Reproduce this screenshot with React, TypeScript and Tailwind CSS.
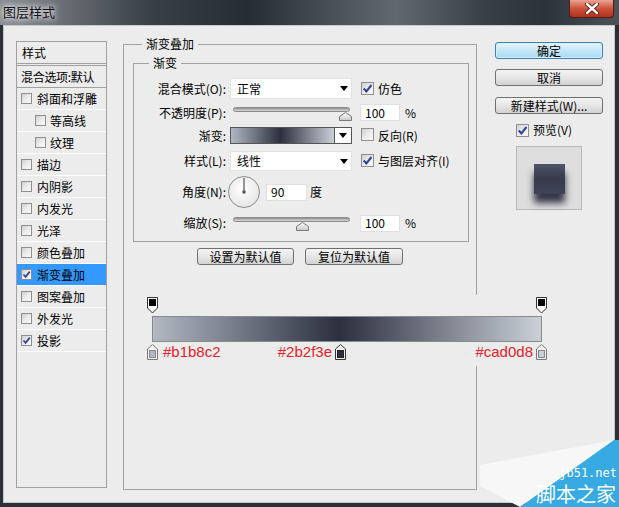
import React from "react";

const Check = ({ on = false, small = false }: { on?: boolean; small?: boolean }) => (
  <span
    className={`${
      small ? "w-[11px] h-[11px]" : "w-[13px] h-[13px]"
    } shrink-0 inline-flex items-center justify-center border border-[#8e8f8f] bg-linear-to-br from-[#cfcfcf] via-[#ebebeb] to-[#fafafa]`}
  >
    {on && (
      <svg viewBox="0 0 10 10" className="w-full h-full">
        <path d="M1.6 5 L4 7.6 L8.6 1.8" fill="none" stroke="#33439a" strokeWidth="1.9" />
      </svg>
    )}
  </span>
);

const Btn = ({ children, className = "" }: { children: React.ReactNode; className?: string }) => (
  <div
    className={`h-[17px] flex items-center justify-center rounded-[3px] border text-[12px] leading-none text-black ${className}`}
  >
    {children}
  </div>
);

const plain = "border-[#707070] bg-linear-to-b from-[#f4f4f4] via-[#e6e6e6] to-[#d2d2d2]";

const Select = ({ value }: { value: string }) => (
  <div className="w-[122px] h-full bg-white border border-[#e2e2e2] flex items-center justify-between pl-[6px] pr-[3px]">
    <span>{value}</span>
    <svg width="8" height="5">
      <path d="M0 0H8L4 5Z" fill="#000" />
    </svg>
  </div>
);

const Thumb = ({ className }: { className: string }) => (
  <svg className={`absolute top-[5px] ${className}`} width="13" height="9">
    <defs>
      <linearGradient id="th" x1="0" y1="0" x2="0" y2="1">
        <stop offset="0" stopColor="#ffffff" />
        <stop offset="1" stopColor="#c8c8c8" />
      </linearGradient>
    </defs>
    <path d="M6.5 0.5 L12.5 4.5 V8.5 H0.5 V4.5 Z" fill="url(#th)" stroke="#7a7a7a" />
  </svg>
);

const Slider = ({ thumb }: { thumb: string }) => (
  <div className="relative w-[117px] h-[14px]">
    <div className="mt-[2px] h-[5px] rounded-full border border-[#8a8a8a] bg-linear-to-b from-[#8f8f8f] to-[#dadada]" />
    <Thumb className={thumb} />
  </div>
);

const Num = ({ v, w = "w-[40px]" }: { v: string; w?: string }) => (
  <div className={`${w} h-[17px] bg-white border border-[#e0e0e0] flex items-center pl-[4px]`}>{v}</div>
);

const Label = ({ children }: { children: React.ReactNode }) => (
  <span className="w-[92px] text-right shrink-0">{children}</span>
);

const TopStop = () => (
  <svg width="11" height="17" className="shrink-0">
    <path d="M0.5 0.5 H10.5 V11 L5.5 16 L0.5 11 Z" fill="#fafafa" stroke="#333" />
    <rect x="2" y="2" width="7" height="7" fill="#000" />
  </svg>
);

const BottomStop = ({ fill, dark = false }: { fill: string; dark?: boolean }) => (
  <svg width="11" height="16" className="shrink-0">
    <path d="M5.5 0.5 L10.5 5 V15.5 H0.5 V5 Z" fill="#f2f2f2" stroke={dark ? "#333" : "#7a7a7a"} />
    <rect x="2.5" y="6.5" width="6" height="7" fill={fill} stroke={dark ? "#222" : "#888"} />
  </svg>
);

const items: { t: string; sub?: boolean; on?: boolean; sel?: boolean }[] = [
  { t: "斜面和浮雕" },
  { t: "等高线", sub: true },
  { t: "纹理", sub: true },
  { t: "描边" },
  { t: "内阴影" },
  { t: "内发光" },
  { t: "光泽" },
  { t: "颜色叠加" },
  { t: "渐变叠加", on: true, sel: true },
  { t: "图案叠加" },
  { t: "外发光" },
  { t: "投影", on: true },
];

export default function App() {
  return (
    <div className="relative w-[619px] h-[507px] overflow-hidden bg-[#2b3037] font-['Noto_Sans_CJK_SC',sans-serif] text-[12px] leading-[14px] text-black">
      {/* title bar */}
      <div className="h-[25px] flex items-start justify-between bg-[linear-gradient(90deg,#8a8f96_0%,#6a6f76_10%,#3a4047_24%,#262c33_40%,#50565d_56%,#626870_64%,#394047_78%,#2c323a_88%,#4d535b_100%)]">
        <span className="ml-[3px] mt-[4px] text-[13px] leading-[16px] text-[#111] [text-shadow:0_0_5px_#fff,0_0_9px_#fff]">
          图层样式
        </span>
        <div className="mr-[5px] w-[45px] h-[18px] rounded-b-[4px] border border-t-0 border-[#5a1a12] bg-linear-to-b from-[#e9a392] via-[#c9533c] to-[#b1301a] flex items-center justify-center">
          <svg width="14" height="11" viewBox="0 0 14 11">
            <path d="M2 1 L12 10 M12 1 L2 10" stroke="#3a0d08" strokeWidth="4" strokeLinecap="round" />
            <path d="M2 1 L12 10 M12 1 L2 10" stroke="#fff" strokeWidth="2.4" strokeLinecap="round" />
          </svg>
        </div>
      </div>

      <div className="flex">
        <div className="w-[3px]" />
        {/* client */}
        <div className="w-[612px] h-[478px] border border-[#c6cacf] bg-[#ececec] flex items-start">
          {/* Left list */}
          <div className="ml-[12px] mt-[15px] w-[91px] h-[447px] border border-[#a0a0a0] flex flex-col">
            <div className="h-[22px] border-b border-[#a0a0a0] flex items-center px-[5px]">样式</div>
            <div className="mt-[1px] h-[23px] border-y border-[#a0a0a0] flex items-center px-[4px] whitespace-nowrap tracking-[-0.3px]">
              混合选项:默认
            </div>
            {items.map((it) => (
              <div
                key={it.t}
                className={`h-[22px] border-b border-white flex items-center ${it.sub ? "pl-[18px] gap-[4px]" : "pl-[4px] gap-[5px]"} ${
                  it.sel ? "bg-[#3399ff]" : ""
                }`}
              >
                <Check small on={it.on} />
                <span>{it.t}</span>
              </div>
            ))}
          </div>

          {/* Main group */}
          <fieldset className="ml-[16px] mt-[10px] w-[354px] h-[454px] border border-[#a0a0a0]">
            <legend className="ml-[18px] px-[4px] leading-[16px]">渐变叠加</legend>
            <fieldset className="ml-[9px] mt-[3px] w-[336px] h-[187px] border border-[#a0a0a0]">
              <legend className="ml-[15px] px-[4px] leading-[16px]">渐变</legend>
              <div className="pt-[7px] flex flex-col">
                <div className="h-[21px] flex items-center">
                  <Label>混合模式(O):</Label>
                  <div className="ml-[4px] h-full">
                    <Select value="正常" />
                  </div>
                  <span className="ml-[9px]">
                    <Check on />
                  </span>
                  <span className="ml-[4px]">仿色</span>
                </div>
                <div className="mt-[4px] h-[19px] flex items-center">
                  <Label>不透明度(P):</Label>
                  <div className="ml-[7px]">
                    <Slider thumb="left-[106px]" />
                  </div>
                  <div className="ml-[10px]">
                    <Num v="100" />
                  </div>
                  <span className="ml-[5px]">%</span>
                </div>
                <div className="mt-[4px] h-[19px] flex items-center">
                  <Label>渐变:</Label>
                  <div className="ml-[4px] h-[17px] flex border border-[#555]">
                    <div className="w-[103px] h-full bg-[linear-gradient(90deg,#b1b8c2_0%,#2b2f3e_48%,#cad0d8_100%)]" />
                    <div className="w-[17px] h-full bg-white border-l border-[#555] flex items-center justify-center">
                      <svg width="8" height="5">
                        <path d="M0 0H8L4 5Z" fill="#000" />
                      </svg>
                    </div>
                  </div>
                  <span className="ml-[9px]">
                    <Check />
                  </span>
                  <span className="ml-[4px]">反向(R)</span>
                </div>
                <div className="mt-[6px] h-[20px] flex items-center">
                  <Label>样式(L):</Label>
                  <div className="ml-[4px] h-full">
                    <Select value="线性" />
                  </div>
                  <span className="ml-[9px]">
                    <Check on />
                  </span>
                  <span className="ml-[4px] whitespace-nowrap">与图层对齐(I)</span>
                </div>
                <div className="mt-[4px] h-[34px] flex items-center">
                  <Label>角度(N):</Label>
                  <svg className="ml-[1px]" width="34" height="34" viewBox="0 0 34 34">
                    <defs>
                      <radialGradient id="dial" cx="0.45" cy="0.4" r="0.7">
                        <stop offset="0" stopColor="#ffffff" />
                        <stop offset="1" stopColor="#e2e2e2" />
                      </radialGradient>
                    </defs>
                    <circle cx="17" cy="17" r="15.5" fill="url(#dial)" stroke="#8c8c8c" />
                    <line x1="17" y1="17" x2="17" y2="3" stroke="#6a6a6a" strokeWidth="1.4" />
                    <circle cx="17" cy="17" r="1.8" fill="#555" />
                  </svg>
                  <div className="ml-[5px]">
                    <Num v="90" w="w-[41px]" />
                  </div>
                  <span className="ml-[3px]">度</span>
                </div>
                <div className="mt-[5px] h-[18px] flex items-center">
                  <Label>缩放(S):</Label>
                  <div className="ml-[7px]">
                    <Slider thumb="left-[63px]" />
                  </div>
                  <div className="ml-[10px]">
                    <Num v="100" />
                  </div>
                  <span className="ml-[5px]">%</span>
                </div>
              </div>
            </fieldset>
            <div className="mt-[6px] flex justify-center gap-[11px]">
              <Btn className={`w-[97px] ${plain}`}>设置为默认值</Btn>
              <Btn className={`w-[98px] ${plain}`}>复位为默认值</Btn>
            </div>
          </fieldset>

          {/* Right column */}
          <div className="ml-[18px] mt-[16px] w-[108px] flex flex-col">
            <Btn className="border-[#3c7fb1] bg-linear-to-b from-[#e6f5fd] via-[#c4e6f8] to-[#a9d8f2] shadow-[inset_0_0_0_1px_#d6f0fc]">
              确定
            </Btn>
            <Btn className={`mt-[10px] ${plain}`}>取消</Btn>
            <Btn className={`mt-[11px] ${plain}`}>新建样式(W)...</Btn>
            <div className="mt-[9px] h-[14px] pl-[21px] flex items-center">
              <Check on />
              <span className="ml-[4px]">预览(V)</span>
            </div>
            <div className="mt-[9px] ml-[21px] w-[66px] h-[64px] border border-[#b8b8b8] bg-[#dedede] flex justify-center pt-[17px]">
              <div className="w-[31px] h-[30px] bg-linear-to-b from-[#50546a] via-[#363a4a] to-[#40445a] shadow-[0_9px_7px_rgba(25,25,45,0.85)]" />
            </div>
          </div>
        </div>
      </div>

      {/* gradient editor overlay (pasted annotation) */}
      <div className="absolute left-[145px] top-[295px] w-[410px] h-[71px] bg-[#ececec] flex flex-col">
        <div className="pt-[2px] pl-[2px] flex">
          <TopStop />
          <span className="ml-[378px]">
            <TopStop />
          </span>
        </div>
        <div className="mt-[2px] ml-[7px] w-[390px] h-[26px] border border-[#8a8a8a] bg-[linear-gradient(90deg,#b1b8c2_0%,#2b2f3e_48%,#cad0d8_100%)]" />
        <div className="mt-[2px] h-[16px] flex items-center font-['Liberation_Sans',sans-serif] text-[15px] leading-[16px] text-[#e4222a]">
          <div className="ml-[2px] w-[80px] flex items-center">
            <BottomStop fill="#b1b8c2" />
            <span className="ml-[5px]">#b1b8c2</span>
          </div>
          <div className="ml-[47px] w-[72px] flex items-center justify-end">
            <span className="mr-[3px]">#2b2f3e</span>
            <BottomStop fill="#2b2f3e" dark />
          </div>
          <div className="ml-[129px] w-[72px] flex items-center justify-end">
            <span className="mr-[3px]">#cad0d8</span>
            <BottomStop fill="#cad0d8" />
          </div>
        </div>
      </div>

      {/* watermark */}
      <div className="absolute right-0 bottom-0 w-[139px] h-[67px]">
        <svg className="absolute inset-0" width="139" height="67">
          <polygon points="0,25 134,0 40,67 0,46" fill="#f7f7f7" />
          <polygon points="134,0 139,0 139,67 40,67" fill="#37a9e3" />
        </svg>
        <span className="absolute right-[2px] top-[26px] font-['DejaVu_Sans_Mono',monospace] text-[12px] leading-[14px] whitespace-nowrap text-white">
          jb51.net
        </span>
        <span className="absolute right-[3px] bottom-[2px] text-[20px] leading-[22px] whitespace-nowrap text-white">
          脚本之家
        </span>
      </div>
    </div>
  );
}
